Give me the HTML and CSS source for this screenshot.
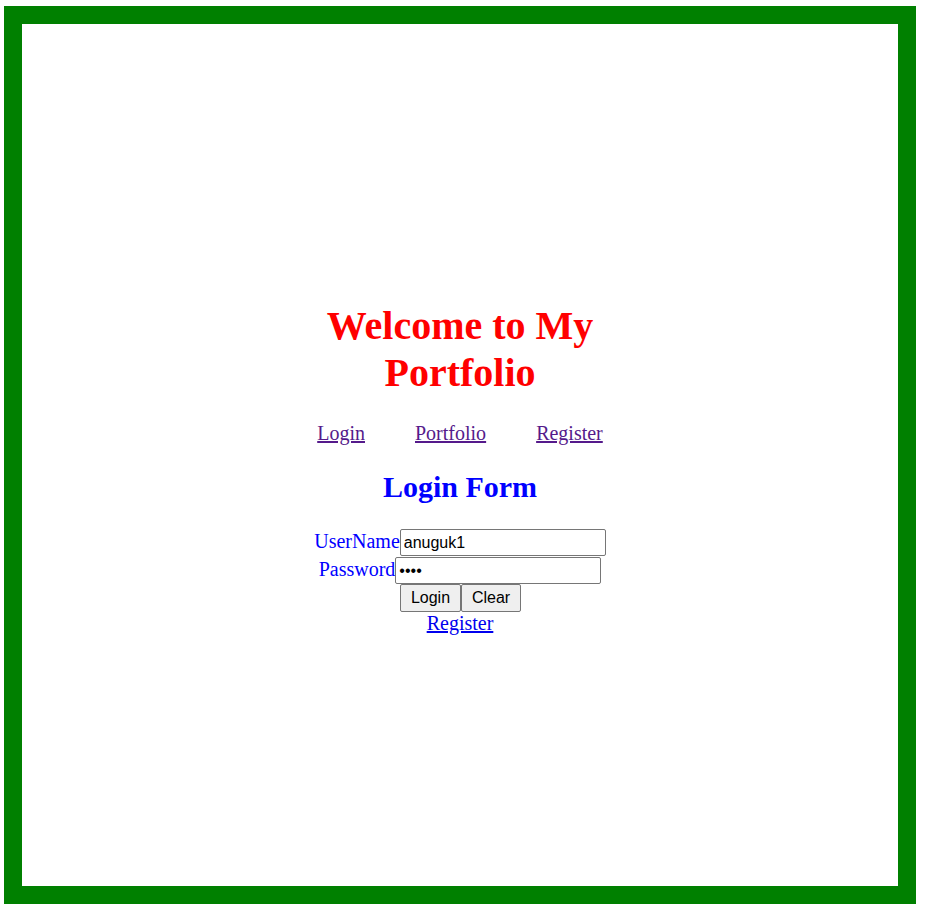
FILE: index.html
```html
<!DOCTYPE html>
<html>
<head>
<meta charset="utf-8">
<title>Portfolio</title>
<link rel="stylesheet" href="styles.css">
</head>
<body>
<div class="frame">
  <div class="content">
    <h1 class="title">Welcome to My Portfolio</h1>
    <nav class="nav">
      <a class="nav-link" href="#">Login</a>
      <a class="nav-link" href="#">Portfolio</a>
      <a class="nav-link" href="#">Register</a>
    </nav>
    <h2 class="form-title">Login Form</h2>
    <form class="form">
      <div class="row row-user">
        <label class="label">UserName</label><input class="field" type="text" value="anuguk1">
      </div>
      <div class="row row-pass">
        <label class="label">Password</label><input class="field" type="password" value="abcd">
      </div>
      <div class="row row-btns">
        <button class="btn btn-login" type="button">Login</button><button class="btn btn-clear" type="button">Clear</button>
      </div>
      <div class="row row-link">
        <a class="reg-link" href="#">Register</a>
      </div>
    </form>
  </div>
</div>
</body>
</html>
```
FILE: styles.css
```css
html, body {
  margin: 0;
  padding: 0;
  background: #ffffff;
}
body {
  font-family: "Liberation Serif", "Times New Roman", serif;
}
.frame {
  margin: 6px 9px 8px 4px;
  border: 18px solid #008000;
  height: 862px;
  box-sizing: content-box;
  display: flex;
  justify-content: center;
}
.content {
  width: 300px;
  padding-top: 278px;
  display: flex;
  flex-direction: column;
  align-items: center;
}
.title {
  margin: 0;
  font-size: 40px;
  line-height: 47px;
  font-weight: bold;
  color: #ff0000;
  text-align: center;
}
.nav {
  margin-top: 26px;
  display: flex;
  gap: 50px;
  font-size: 20px;
  line-height: 23px;
}
.nav-link {
  color: #551a8b;
  text-decoration: underline;
}
.form-title {
  margin: 25px 0 0;
  font-size: 30px;
  line-height: 34px;
  font-weight: bold;
  color: #0000ff;
}
.form {
  margin-top: 25px;
  display: flex;
  flex-direction: column;
  align-items: center;
}
.row {
  display: flex;
  align-items: baseline;
  justify-content: center;
}
.row-user {
  height: 28px;
}
.row-pass {
  height: 27px;
}
.row-btns {
  height: 28px;
  padding-left: 1px;
}
.label {
  font-size: 20px;
  color: #0000ff;
}
.field {
  width: 206px;
  height: 27px;
  box-sizing: border-box;
  margin: 0;
  padding: 1px 3px;
  border: 1px solid #767676;
  border-radius: 2px;
  font-family: "Liberation Sans", Arial, sans-serif;
  font-size: 16px;
  color: #000000;
  background: #ffffff;
}
.btn {
  height: 28px;
  box-sizing: border-box;
  margin: 0;
  padding: 0;
  border: 1px solid #767676;
  border-radius: 2px;
  background: #efefef;
  font-family: "Liberation Sans", Arial, sans-serif;
  font-size: 16px;
  color: #000000;
}
.btn-login {
  width: 61px;
}
.btn-clear {
  width: 60px;
}
.row-link {
  font-size: 20px;
  line-height: 23px;
}
.reg-link {
  color: #0000ee;
  text-decoration: underline;
}
```
